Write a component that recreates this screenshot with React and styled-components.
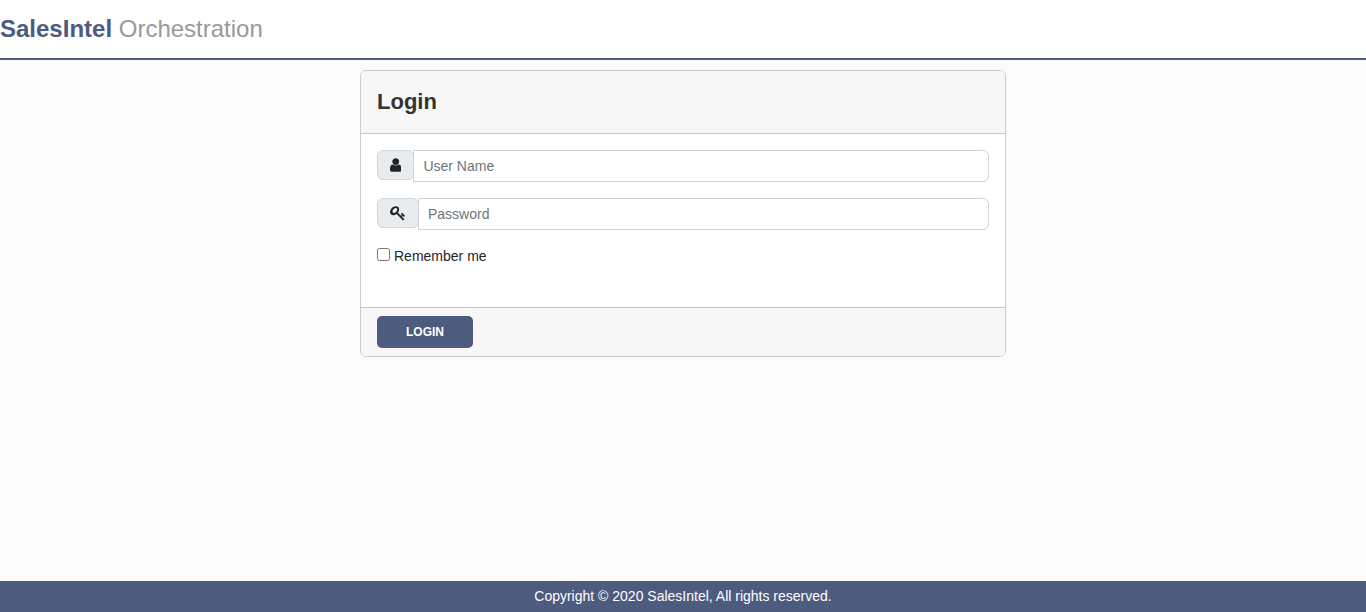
import React from "react";
import styled, { createGlobalStyle } from "styled-components";

const GlobalStyle = createGlobalStyle`
  *, *::before, *::after { box-sizing: border-box; }
  body {
    margin: 0;
    background: #fbfbfb;
    color: #212529;
    font-family: "Liberation Sans", Arial, sans-serif;
    font-size: 14px;
    line-height: 21px;
  }
`;

const Page = styled.div`
  display: flex;
  flex-direction: column;
  min-height: 100vh;
`;

const Header = styled.header`
  height: 60px;
  padding-top: 11px;
  background: #fff;
  border-bottom: 2px solid #4d5b7f;
  color: #999;
  font-size: 24px;
  line-height: 36px;
`;

const Brand = styled.strong`
  color: #4d5b7f;
`;

const Main = styled.main`
  flex: 1;
  padding-top: 10px;
`;

const Card = styled.form`
  width: 646px;
  margin: 0 auto;
  background: #fff;
  border: 1px solid #ccc;
  border-radius: 6px;
  overflow: hidden;
`;

const CardHeader = styled.div`
  height: 63px;
  padding: 14px 16px;
  background: #f7f7f7;
  border-bottom: 1px solid #c8c8c8;
`;

const Title = styled.h1`
  margin: 0;
  color: #333;
  font-size: 22px;
  line-height: 33px;
`;

const CardBody = styled.div`
  height: 173px;
  padding: 16px;
`;

const CardFooter = styled.div`
  height: 49px;
  padding: 8px 16px;
  background: #f7f7f7;
  border-top: 1px solid #c8c8c8;
`;

const InputGroup = styled.div`
  display: flex;
  align-items: flex-start;
  margin-bottom: 16px;
`;

const Addon = styled.span`
  display: flex;
  align-items: center;
  height: 30px;
  padding: 0 12px;
  background: #e9ecef;
  border: 1px solid #ced4da;
  border-radius: 6px;
`;

const Icon = styled.svg`
  display: block;
  width: ${(p) => p.$width}px;
  height: 16px;
  fill: #212529;
`;

const Input = styled.input`
  flex: 1;
  min-width: 0;
  height: 32px;
  margin-left: -1px;
  padding: 0 9px;
  border: 1px solid #ced4da;
  border-radius: 0 6px 6px 0;
  background: #fff;
  font: inherit;
  &::placeholder { color: #6c757d; opacity: 1; }
`;

const Remember = styled.label`
  display: flex;
  align-items: flex-start;
  gap: 4px;
`;

const Checkbox = styled.input`
  width: 13px;
  height: 13px;
  margin: 2px 0 0;
`;

const Button = styled.button`
  display: block;
  width: 96px;
  height: 32px;
  padding: 0;
  border: 0;
  border-radius: 5px;
  background: #4d5b7f;
  color: #fff;
  font: bold 12px/32px "Liberation Sans", Arial, sans-serif;
`;

const Footer = styled.footer`
  height: 31px;
  padding-top: 5px;
  background: #4d5b7f;
  color: #fff;
  text-align: center;
`;

const UserIcon = () => (
  <Icon $width={11.43} viewBox="256 0 1280 1792" aria-hidden="true">
    <path d="M1536 1399q0 109-62.5 187t-150.5 78h-854q-88 0-150.5-78t-62.5-187q0-85 8.5-160.5t31.5-152 58.5-131 94-89 134.5-34.5q131 128 313 128t313-128q76 0 134.5 34.5t94 89 58.5 131 31.5 152 8.5 160.5zm-256-887q0 159-112.5 271.5t-271.5 112.5-271.5-112.5-112.5-271.5 112.5-271.5 271.5-112.5 271.5 112.5 112.5 271.5z" />
  </Icon>
);

const KeyIcon = () => (
  <Icon $width={16} viewBox="0 0 1792 1792" aria-hidden="true">
    <path
      fillRule="evenodd"
      d="M318 834A320 215 -45 0 1 770 382A320 215 -45 0 1 318 834zM1683 1216q0 17-49 66t-66 49q-9 0-28.5-16t-36.5-33-38.5-40-24.5-26l-96 96 220 220q28 28 28 68 0 42-39 81t-81 39q-40 0-68-28l-671-671q-176 131-365 131-163 0-265.5-102.5t-102.5-265.5q0-160 95-313t248-248 313-95q163 0 265.5 102.5t102.5 265.5q0 189-131 365l355 355 96-96q-3-3-26-24.5t-40-38.5-33-36.5-16-28.5q0-17 49-66t66-49q13 0 23 10 6 6 46 44.5t82 79.5 86.5 86 73 78 28.5 41z"
    />
  </Icon>
);

export default function App() {
  return (
    <Page>
      <GlobalStyle />
      <Header>
        <Brand>SalesIntel</Brand> Orchestration
      </Header>
      <Main>
        <Card onSubmit={(e) => e.preventDefault()}>
          <CardHeader>
            <Title>Login</Title>
          </CardHeader>
          <CardBody>
            <InputGroup>
              <Addon><UserIcon /></Addon>
              <Input type="text" placeholder="User Name" />
            </InputGroup>
            <InputGroup>
              <Addon><KeyIcon /></Addon>
              <Input type="password" placeholder="Password" />
            </InputGroup>
            <Remember>
              <Checkbox type="checkbox" />
              Remember me
            </Remember>
          </CardBody>
          <CardFooter>
            <Button type="submit">LOGIN</Button>
          </CardFooter>
        </Card>
      </Main>
      <Footer>Copyright © 2020 SalesIntel, All rights reserved.</Footer>
    </Page>
  );
}
